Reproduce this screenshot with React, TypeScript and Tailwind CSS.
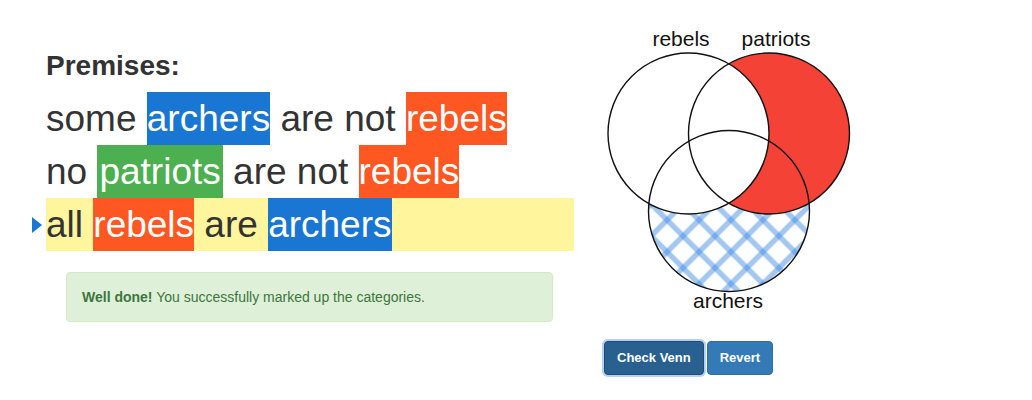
import React from 'react'

const word = 'inline-block text-white'

function Venn() {
  return (
    <svg width="270" height="300" viewBox="0 0 270 300" className="block">
      <defs>
        <pattern id="hatch" width="22.6" height="22.6" patternUnits="userSpaceOnUse" patternTransform="translate(120 200) rotate(45)">
          <line x1="-1" y1="11.3" x2="23.6" y2="11.3" stroke="#4a90e2" strokeOpacity="0.5" strokeWidth="5.5" />
          <line x1="11.3" y1="-1" x2="11.3" y2="23.6" stroke="#4a90e2" strokeOpacity="0.5" strokeWidth="5.5" />
        </pattern>
        <mask id="notRebels">
          <rect width="270" height="300" fill="white" />
          <circle cx="93.5" cy="113.5" r="80.5" fill="black" />
        </mask>
        <mask id="outsideTop">
          <rect width="270" height="300" fill="white" />
          <circle cx="93.5" cy="113.5" r="80.5" fill="black" />
          <circle cx="174" cy="113.5" r="80.5" fill="black" />
        </mask>
      </defs>
      <circle cx="174" cy="113.5" r="80.5" fill="#f44336" mask="url(#notRebels)" />
      <circle cx="134" cy="191" r="80.5" fill="url(#hatch)" mask="url(#outsideTop)" />
      <g fill="none" stroke="#111" strokeWidth="1.4">
        <circle cx="93.5" cy="113.5" r="80.5" />
        <circle cx="174" cy="113.5" r="80.5" />
        <circle cx="134" cy="191" r="80.5" />
      </g>
      <g fontFamily="'Liberation Sans', Arial, sans-serif" fontSize="21" fill="#111" textAnchor="middle">
        <text x="86" y="26">rebels</text>
        <text x="181" y="26">patriots</text>
        <text x="133" y="288">archers</text>
      </g>
    </svg>
  )
}

export default function App() {
  return (
    <div className="w-[1032px] h-[400px] bg-white flex items-start font-['Liberation_Sans',Arial,sans-serif] text-[#333]">
      <div className="ml-[46px] w-[528px] pt-[51px]">
        <h3 className="text-[28px] font-bold leading-[1.1]">Premises:</h3>
        <div className="mt-[10px] text-[37px] leading-[53px]">
          <div className="whitespace-nowrap">
            some <span className={`${word} bg-[#1976d2]`}>archers</span> are not <span className={`${word} bg-[#ff5722]`}>rebels</span>
          </div>
          <div className="whitespace-nowrap">
            no <span className={`${word} bg-[#4caf50] px-[2px]`}>patriots</span> are not <span className={`${word} bg-[#ff5722]`}>rebels</span>
          </div>
          <div className="relative whitespace-nowrap bg-[#fff59d]">
            <span className="absolute left-[-14px] top-[19px] w-0 h-0 border-y-[8px] border-y-transparent border-l-[10px] border-l-[#1976d2]" />
            all <span className={`${word} bg-[#ff5722]`}>rebels</span> are <span className={`${word} bg-[#1976d2]`}>archers</span>
          </div>
        </div>
        <div className="mt-[21px] ml-[20px] w-[487px] rounded-[4px] border border-[#d6e9c6] bg-[#dff0d8] px-[15px] py-[14px] text-[14px] leading-[20px] text-[#3c763d]">
          <b>Well done!</b> You successfully marked up the categories.
        </div>
      </div>
      <div className="ml-[21px] pt-[20px]">
        <Venn />
        <div className="mt-[21px] ml-[9px] flex gap-[3px]">
          <button className="rounded-[4px] border border-[#204d74] bg-[#286090] px-[12px] py-[6px] text-[13px] font-bold leading-[20px] text-white shadow-[0_0_0_2px_rgba(120,170,235,0.55)]">
            Check Venn
          </button>
          <button className="rounded-[4px] border border-[#2e6da4] bg-[#337ab7] px-[12px] py-[6px] text-[13px] font-bold leading-[20px] text-white">
            Revert
          </button>
        </div>
      </div>
    </div>
  )
}
